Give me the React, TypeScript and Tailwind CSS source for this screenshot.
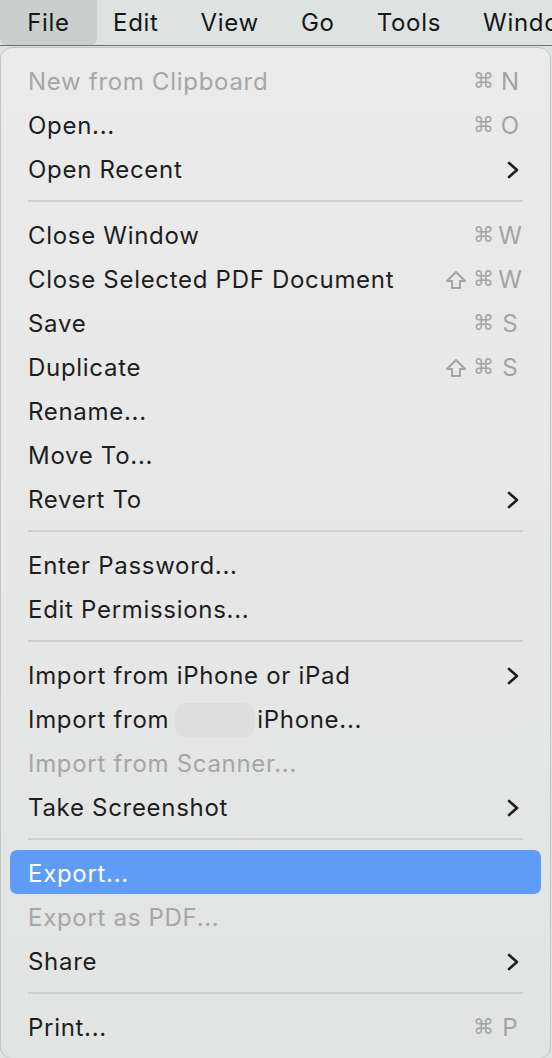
import React from 'react'

type Item =
  | { sep: true }
  | {
      sep?: false
      label: React.ReactNode
      disabled?: boolean
      active?: boolean
      mods?: string
      keyChar?: string
      sub?: boolean
    }

const items: Item[] = [
  { label: 'New from Clipboard', disabled: true, mods: '⌘', keyChar: 'N' },
  { label: 'Open...', mods: '⌘', keyChar: 'O' },
  { label: 'Open Recent', sub: true },
  { sep: true },
  { label: 'Close Window', mods: '⌘', keyChar: 'W' },
  { label: 'Close Selected PDF Document', mods: '⇧⌘', keyChar: 'W' },
  { label: 'Save', mods: '⌘', keyChar: 'S' },
  { label: 'Duplicate', mods: '⇧⌘', keyChar: 'S' },
  { label: 'Rename...' },
  { label: 'Move To...' },
  { label: 'Revert To', sub: true },
  { sep: true },
  { label: 'Enter Password...' },
  { label: 'Edit Permissions...' },
  { sep: true },
  { label: 'Import from iPhone or iPad', sub: true },
  {
    label: (
      <span className="flex items-center">
        Import from
        <span className="ml-[6px] mr-[2px] inline-block h-[34px] w-[80px] rounded-[10px] bg-[#dedede]" />
        iPhone...
      </span>
    ),
  },
  { label: 'Import from Scanner...', disabled: true },
  { label: 'Take Screenshot', sub: true },
  { sep: true },
  { label: 'Export...', active: true },
  { label: 'Export as PDF...', disabled: true },
  { label: 'Share', sub: true },
  { sep: true },
  { label: 'Print...', mods: '⌘', keyChar: 'P' },
]

function Chevron() {
  return (
    <svg width="14" height="20" viewBox="0 0 14 20" className="mr-[2px]">
      <path d="M3 3 L11 10 L3 17" fill="none" stroke="#1d1d1d" strokeWidth="2.6" strokeLinecap="round" strokeLinejoin="round" />
    </svg>
  )
}

function Shortcut({ mods, keyChar }: { mods: string; keyChar: string }) {
  return (
    <div className="flex items-center text-[#a3a3a3] tracking-normal">
      {mods.includes('⇧') && (
        <svg width="22" height="20" viewBox="0 0 22 20" className="mr-[6px]">
          <path d="M11 2 L20 11 L15 11 L15 18 L7 18 L7 11 L2 11 Z" fill="none" stroke="#a3a3a3" strokeWidth="2" strokeLinejoin="round" />
        </svg>
      )}
      <span className="font-['DejaVu_Sans',sans-serif] text-[21px] leading-none">⌘</span>
      <span className="ml-[4px] w-[24px] text-center text-[24px]">{keyChar}</span>
    </div>
  )
}

export default function App() {
  return (
    <div className="h-[1058px] w-[552px] overflow-hidden bg-[#dfe4e3] font-['Inter',sans-serif] text-[24px] tracking-[0.7px] text-[#1e1e1e]">
      <div className="flex h-[46px] items-center border-b border-[#6b6f6e] bg-[#dde3e1] text-[#161616]">
        <div className="flex h-full w-[97px] shrink-0 items-center justify-center rounded-b-[6px] bg-[#c9cfcd]">File</div>
        <div className="ml-[16px] flex shrink-0 gap-[42px] whitespace-nowrap">
          <span>Edit</span>
          <span>View</span>
          <span>Go</span>
          <span>Tools</span>
          <span>Windo</span>
        </div>
      </div>
      <div className="mt-[1px] h-[1012px] w-[551px] rounded-[12px] border border-[#c4c4c4] bg-gradient-to-b from-[#ebebeb] to-[#e2e3e3] pt-[10px]">
        {items.map((it, i) =>
          it.sep ? (
            <div key={i} className="flex h-[22px] items-center px-[27px]">
              <div className="h-[2px] w-full bg-[#d0d0d0]" />
            </div>
          ) : (
            <div
              key={i}
              className={`mx-[9px] flex h-[44px] items-center justify-between rounded-[7px] pl-[18px] pr-[19px] pt-[3px] ${
                it.active ? 'bg-[#5f9cf7] text-white' : it.disabled ? 'text-[#a6a6a6]' : ''
              }`}
            >
              <span className="whitespace-nowrap">{it.label}</span>
              {it.keyChar && <Shortcut mods={it.mods ?? ''} keyChar={it.keyChar} />}
              {it.sub && <Chevron />}
            </div>
          )
        )}
      </div>
    </div>
  )
}
